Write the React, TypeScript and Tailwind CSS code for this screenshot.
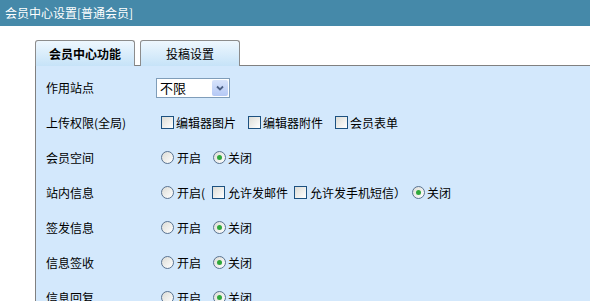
const FONT = { fontFamily: '"Noto Sans CJK SC", "Liberation Sans", sans-serif' };

function CheckBox() {
  return (
    <span className="inline-block w-[13px] h-[13px] border border-[#1c5180] bg-gradient-to-br from-[#dcdcd6] to-[#ffffff] shrink-0" />
  );
}

function Radio({ on }: { on?: boolean }) {
  return (
    <span className="inline-flex items-center justify-center w-[13px] h-[13px] rounded-full border border-[#5a7390] bg-gradient-to-br from-[#dcdcd6] to-[#ffffff] shrink-0">
      {on && <span className="w-[5px] h-[5px] rounded-full bg-[#2fa83a]" />}
    </span>
  );
}

function OnOff() {
  return (
    <div className="flex items-center">
      <Radio />
      <span className="ml-[3px]">开启</span>
      <span className="ml-[12px]" />
      <Radio on />
      <span className="ml-[2px]">关闭</span>
    </div>
  );
}

function Row({ label, children }: { label: string; children: React.ReactNode }) {
  return (
    <div className="flex items-center h-[35px]">
      <div className="w-[121px] pl-[10px]">{label}</div>
      <div className="pl-[4px] flex items-center">{children}</div>
    </div>
  );
}

export default function App() {
  return (
    <div className="w-[590px] h-[301px] overflow-hidden bg-white text-[12px] text-black leading-none" style={FONT}>
      {/* title bar */}
      <div className="h-[26px] bg-[#4589a9] text-white pl-[5px] flex items-center">会员中心设置[普通会员]</div>

      <div className="pt-[14px] pl-[35px]">
        {/* tabs */}
        <div className="flex gap-[5px] relative z-10">
          <div className="w-[100px] h-[26px] -mb-px border border-[#8c8c8c] border-b-0 rounded-t-[3px] bg-gradient-to-b from-[#eef7fe] to-[#c6e3f8] flex items-center justify-center font-bold">
            会员中心功能
          </div>
          <div className="w-[100px] h-[26px] -mb-px border border-[#8c8c8c] border-b-0 rounded-t-[3px] bg-gradient-to-b from-[#eef7fe] to-[#c6e3f8] flex items-center justify-center">
            投稿设置
          </div>
        </div>

        {/* panel */}
        <div className="border-t border-l border-[#808080] bg-[#d3e8fc] pt-[4px] h-[300px]">
          <Row label="作用站点">
            <div className="-ml-[5px] w-[74px] h-[20px] border border-[#7f9db9] bg-white flex items-center justify-between pl-[3px] pr-px">
              <span className="text-[13px]">不限</span>
              <span className="w-[16px] h-[16px] rounded-[2px] bg-gradient-to-b from-[#d8e4fb] to-[#b4c8f5] flex items-center justify-center">
                <svg width="8" height="6" viewBox="0 0 8 6">
                  <path d="M1 1.5 L4 4.5 L7 1.5" fill="none" stroke="#4d6185" strokeWidth="1.8" />
                </svg>
              </span>
            </div>
          </Row>
          <Row label="上传权限(全局)">
            <CheckBox />
            <span className="ml-[2px]">编辑器图片</span>
            <span className="ml-[12px]" />
            <CheckBox />
            <span className="ml-[2px]">编辑器附件</span>
            <span className="ml-[12px]" />
            <CheckBox />
            <span className="ml-[2px]">会员表单</span>
          </Row>
          <Row label="会员空间">
            <OnOff />
          </Row>
          <Row label="站内信息">
            <Radio />
            <span className="ml-[3px]">开启(</span>
            <span className="ml-[7px]" />
            <CheckBox />
            <span className="ml-[3px]">允许发邮件</span>
            <span className="ml-[6px]" />
            <CheckBox />
            <span className="ml-[3px]">允许发手机短信）</span>
            <span className="ml-[6px]" />
            <Radio on />
            <span className="ml-[2px]">关闭</span>
          </Row>
          <Row label="签发信息">
            <OnOff />
          </Row>
          <Row label="信息签收">
            <OnOff />
          </Row>
          <Row label="信息回复">
            <OnOff />
          </Row>
        </div>
      </div>
    </div>
  );
}
